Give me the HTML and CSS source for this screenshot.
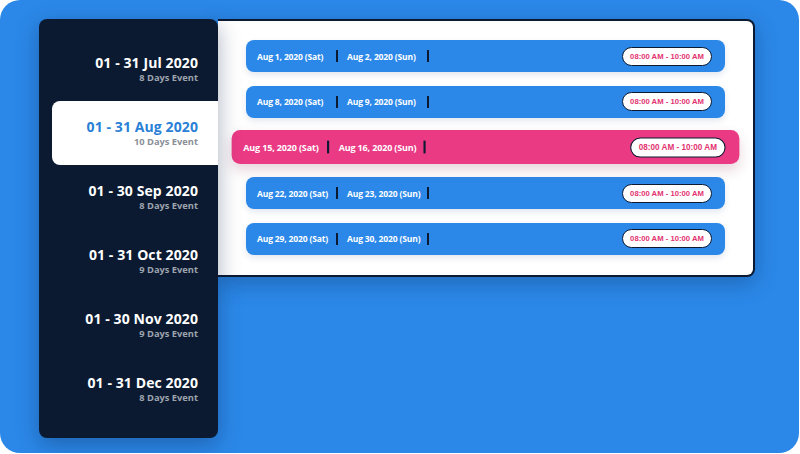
FILE: index.html
```html
<!DOCTYPE html>
<html>
<head>
<meta charset="utf-8">
<link rel="stylesheet" href="styles.css">
</head>
<body>
<div class="stage">
  <aside class="sidebar">
    <div class="month"><div class="m-title">01 - 31 Jul 2020</div><div class="m-sub">8 Days Event</div></div>
    <div class="month active"><div class="m-title">01 - 31 Aug 2020</div><div class="m-sub">10 Days Event</div></div>
    <div class="month"><div class="m-title">01 - 30 Sep 2020</div><div class="m-sub">8 Days Event</div></div>
    <div class="month"><div class="m-title">01 - 31 Oct 2020</div><div class="m-sub">9 Days Event</div></div>
    <div class="month"><div class="m-title">01 - 30 Nov 2020</div><div class="m-sub">9 Days Event</div></div>
    <div class="month"><div class="m-title">01 - 31 Dec 2020</div><div class="m-sub">8 Days Event</div></div>
  </aside>
  <main class="panel">
    <div class="row"><span class="day">Aug 1, 2020 (Sat)</span><span class="sep"></span><span class="day">Aug 2, 2020 (Sun)</span><span class="sep"></span><span class="time">08:00 AM - 10:00 AM</span></div>
    <div class="row"><span class="day">Aug 8, 2020 (Sat)</span><span class="sep"></span><span class="day">Aug 9, 2020 (Sun)</span><span class="sep"></span><span class="time">08:00 AM - 10:00 AM</span></div>
    <div class="row hot"><span class="day">Aug 15, 2020 (Sat)</span><span class="sep"></span><span class="day">Aug 16, 2020 (Sun)</span><span class="sep"></span><span class="time">08:00 AM - 10:00 AM</span></div>
    <div class="row"><span class="day">Aug 22, 2020 (Sat)</span><span class="sep"></span><span class="day">Aug 23, 2020 (Sun)</span><span class="sep"></span><span class="time">08:00 AM - 10:00 AM</span></div>
    <div class="row"><span class="day">Aug 29, 2020 (Sat)</span><span class="sep"></span><span class="day">Aug 30, 2020 (Sun)</span><span class="sep"></span><span class="time">08:00 AM - 10:00 AM</span></div>
  </main>
</div>
</body>
</html>
```
FILE: styles.css
```css
* { box-sizing: border-box; }
html, body { margin: 0; padding: 0; background: #ffffff; }
body { font-family: "Open Sans", "Noto Sans", sans-serif; }

.stage {
  width: 799px;
  height: 453px;
  background: #2b88e8;
  border-radius: 20px;
  display: flex;
  align-items: flex-start;
  padding: 19px 0 0 39px;
}

.sidebar {
  width: 179px;
  height: 419px;
  background: #0b1a31;
  border-radius: 8px;
  padding-top: 18px;
  padding-left: 13px;
  display: flex;
  flex-direction: column;
  box-shadow: 0 6px 22px rgba(10, 30, 70, 0.35);
  position: relative;
  z-index: 1;
}

.month {
  height: 64px;
  display: flex;
  flex-direction: column;
  justify-content: center;
  align-items: flex-end;
  padding-right: 20px;
  border-radius: 8px 0 0 8px;
}
.m-title {
  color: #ffffff;
  font-weight: 700;
  font-size: 14px;
  line-height: 17px;
  letter-spacing: 0.1px;
}
.m-sub {
  color: #9ea3ad;
  font-weight: 700;
  font-size: 9.3px;
  line-height: 13px;
}
.month.active { background: #ffffff; }
.month.active .m-title { color: #2a7fd6; }
.month.active .m-sub { color: #8a8f98; }

.panel {
  width: 537px;
  height: 258px;
  background: #ffffff;
  border: 2px solid #0b1a31;
  border-left: none;
  border-radius: 0 8px 8px 0;
  padding: 19px 28px 0 28px;
  display: flex;
  flex-direction: column;
  gap: 13.7px;
  box-shadow: 0 6px 22px rgba(10, 30, 70, 0.3);
}

.row {
  height: 32px;
  flex: none;
  background: #2b88e8;
  border-radius: 8px;
  display: flex;
  align-items: center;
  padding: 0 13px 0 11px;
  color: #ffffff;
  font-weight: 700;
  font-size: 8.5px;
  letter-spacing: -0.15px;
  box-shadow: 0 3px 6px rgba(20, 60, 120, 0.12);
}
.row.hot {
  background: #ea3a84;
  transform: scale(1.06);
  box-shadow: 0 6px 12px rgba(120, 20, 60, 0.18);
}
.day { white-space: nowrap; }
.day:first-child { width: 79px; }
.day:nth-child(3) { width: 80px; }
.sep {
  width: 2px;
  height: 12px;
  background: #0b1a31;
  margin-right: 9px;
}
.sep:nth-child(4) { margin-right: 0; }

.time {
  margin-left: auto;
  height: 19px;
  width: 90px;
  justify-content: center;
  background: #ffffff;
  border: 1.5px solid #0b1a31;
  border-radius: 10px;
  color: #e2326f;
  font-family: "Liberation Sans", Arial, sans-serif;
  font-size: 7.7px;
  letter-spacing: 0;
  font-weight: 700;
  display: flex;
  align-items: center;
}
```
